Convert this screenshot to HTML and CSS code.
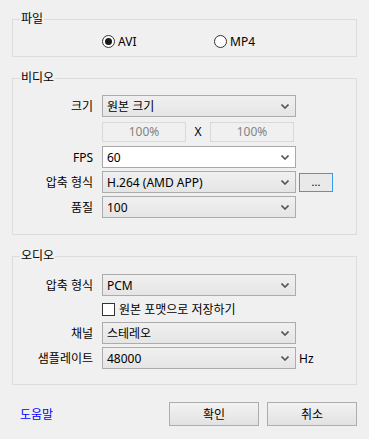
FILE: index.html
```html
<!DOCTYPE html>
<html lang="ko">

<head>
  <meta charset="UTF-8" />
  <title>내보내기 설정</title>
  <link rel="stylesheet" href="styles.css">
</head>

<body>
  <div class="dialog">

    <fieldset class="group group-file">
      <legend>파일</legend>
      <div class="radio-row">
        <label class="radio-item"><span class="radio checked"></span>AVI</label>
        <label class="radio-item"><span class="radio"></span>MP4</label>
      </div>
    </fieldset>

    <fieldset class="group group-video">
      <legend>비디오</legend>
      <div class="form-grid">
        <span class="label">크기</span>
        <div class="combo">
          <span>원본 크기</span>
          <svg class="arrow" width="8" height="5" viewBox="0 0 8 5"><path d="M0.5 0.5 L4 4 L7.5 0.5" fill="none" stroke="#555" stroke-width="1.6" /></svg>
        </div>
        <span></span>

        <span></span>
        <div class="size-row">
          <div class="textbox">100%</div>
          <span class="times">X</span>
          <div class="textbox">100%</div>
        </div>
        <span></span>

        <span class="label">FPS</span>
        <div class="combo editable">
          <span>60</span>
          <svg class="arrow" width="8" height="5" viewBox="0 0 8 5"><path d="M0.5 0.5 L4 4 L7.5 0.5" fill="none" stroke="#555" stroke-width="1.6" /></svg>
        </div>
        <span></span>

        <span class="label">압축 형식</span>
        <div class="combo">
          <span>H.264 (AMD APP)</span>
          <svg class="arrow" width="8" height="5" viewBox="0 0 8 5"><path d="M0.5 0.5 L4 4 L7.5 0.5" fill="none" stroke="#555" stroke-width="1.6" /></svg>
        </div>
        <button class="more">...</button>

        <span class="label">품질</span>
        <div class="combo">
          <span>100</span>
          <svg class="arrow" width="8" height="5" viewBox="0 0 8 5"><path d="M0.5 0.5 L4 4 L7.5 0.5" fill="none" stroke="#555" stroke-width="1.6" /></svg>
        </div>
        <span></span>
      </div>
    </fieldset>

    <fieldset class="group group-audio">
      <legend>오디오</legend>
      <div class="form-grid">
        <span class="label">압축 형식</span>
        <div class="combo">
          <span>PCM</span>
          <svg class="arrow" width="8" height="5" viewBox="0 0 8 5"><path d="M0.5 0.5 L4 4 L7.5 0.5" fill="none" stroke="#555" stroke-width="1.6" /></svg>
        </div>
        <span></span>

        <span></span>
        <label class="check-item"><span class="checkbox"></span>원본 포맷으로 저장하기</label>
        <span></span>

        <span class="label">채널</span>
        <div class="combo">
          <span>스테레오</span>
          <svg class="arrow" width="8" height="5" viewBox="0 0 8 5"><path d="M0.5 0.5 L4 4 L7.5 0.5" fill="none" stroke="#555" stroke-width="1.6" /></svg>
        </div>
        <span></span>

        <span class="label">샘플레이트</span>
        <div class="combo">
          <span>48000</span>
          <svg class="arrow" width="8" height="5" viewBox="0 0 8 5"><path d="M0.5 0.5 L4 4 L7.5 0.5" fill="none" stroke="#555" stroke-width="1.6" /></svg>
        </div>
        <span class="unit">Hz</span>
      </div>
    </fieldset>

    <div class="footer">
      <a class="help" href="#">도움말</a>
      <button class="btn">확인</button>
      <button class="btn">취소</button>
    </div>

  </div>
</body>

</html>
```

FILE: styles.css
```css
html,
body {
  margin: 0;
  background: #f0f0f0;
}

body {
  font-family: 'Noto Sans', 'Noto Sans CJK KR', sans-serif;
  font-size: 12px;
  color: #000;
  width: 369px;
  height: 439px;
  overflow: hidden;
}

.dialog {
  padding: 0 12px;
}

.group {
  margin: 0;
  padding: 0;
  border: 1px solid #dcdcdc;
  min-width: 0;
}

.group legend {
  margin-left: 7px;
  padding: 0 1px;
  line-height: 16px;
  height: 16px;
}

.group-file {
  margin-top: 11px;
}

.group-video {
  margin-top: 13px;
  padding: 9px 0 16px;
}

.group-audio {
  margin-top: 13px;
  padding: 10px 0 15px;
}

/* file type radios */
.radio-row {
  display: flex;
  padding: 6px 0 7px 89px;
}

.radio-item {
  display: flex;
  align-items: center;
  width: 112px;
  height: 16px;
}

.radio {
  width: 11px;
  height: 11px;
  border: 1px solid #333;
  border-radius: 50%;
  background: #fff;
  margin-right: 3px;
  position: relative;
}

.radio.checked::after {
  content: '';
  position: absolute;
  left: 2px;
  top: 2px;
  width: 7px;
  height: 7px;
  border-radius: 50%;
  background: #1a1a1a;
}

/* forms */
.form-grid {
  display: grid;
  grid-template-columns: 89px 194px auto;
  row-gap: 3px;
  align-items: center;
}

.label {
  text-align: right;
  padding-right: 9px;
}

.combo {
  height: 22px;
  box-sizing: border-box;
  border: 1px solid #acacac;
  background: linear-gradient(#f0f0f0, #e5e5e5);
  display: flex;
  align-items: center;
  padding: 0 6px 0 4px;
}

.combo.editable {
  background: #fff;
  border-color: #a9a9a9;
}

.combo span {
  flex: 1;
}

.arrow {
  display: block;
}

.size-row {
  display: flex;
  align-items: center;
  height: 23px;
}

.textbox {
  width: 84px;
  height: 20px;
  box-sizing: border-box;
  border: 1px solid #d9d9d9;
  color: #838383;
  text-align: center;
  line-height: 18px;
}

.times {
  width: 24px;
  text-align: center;
}

.more {
  margin-left: 3px;
  width: 34px;
  height: 19px;
  padding: 0;
  border: 1px solid #3c9be6;
  background: #e9e9e9;
  font-family: inherit;
  font-size: 11px;
  line-height: 12px;
}

.check-item {
  display: flex;
  align-items: center;
  height: 20px;
}

.checkbox {
  width: 11px;
  height: 11px;
  border: 1px solid #333;
  background: #fff;
  margin-right: 4px;
}

.unit {
  margin-left: 3px;
}

/* buttons */
.footer {
  display: flex;
  align-items: center;
  gap: 8px;
  margin-top: 17px;
  padding-left: 8px;
}

.help {
  color: #0000ff;
  text-decoration: none;
  margin-right: auto;
}

.btn {
  width: 90px;
  height: 24px;
  border: 1px solid #adadad;
  background: linear-gradient(#f2f2f2, #e2e2e2);
  font-family: inherit;
  font-size: 12px;
  color: #000;
  padding: 0;
}
```
